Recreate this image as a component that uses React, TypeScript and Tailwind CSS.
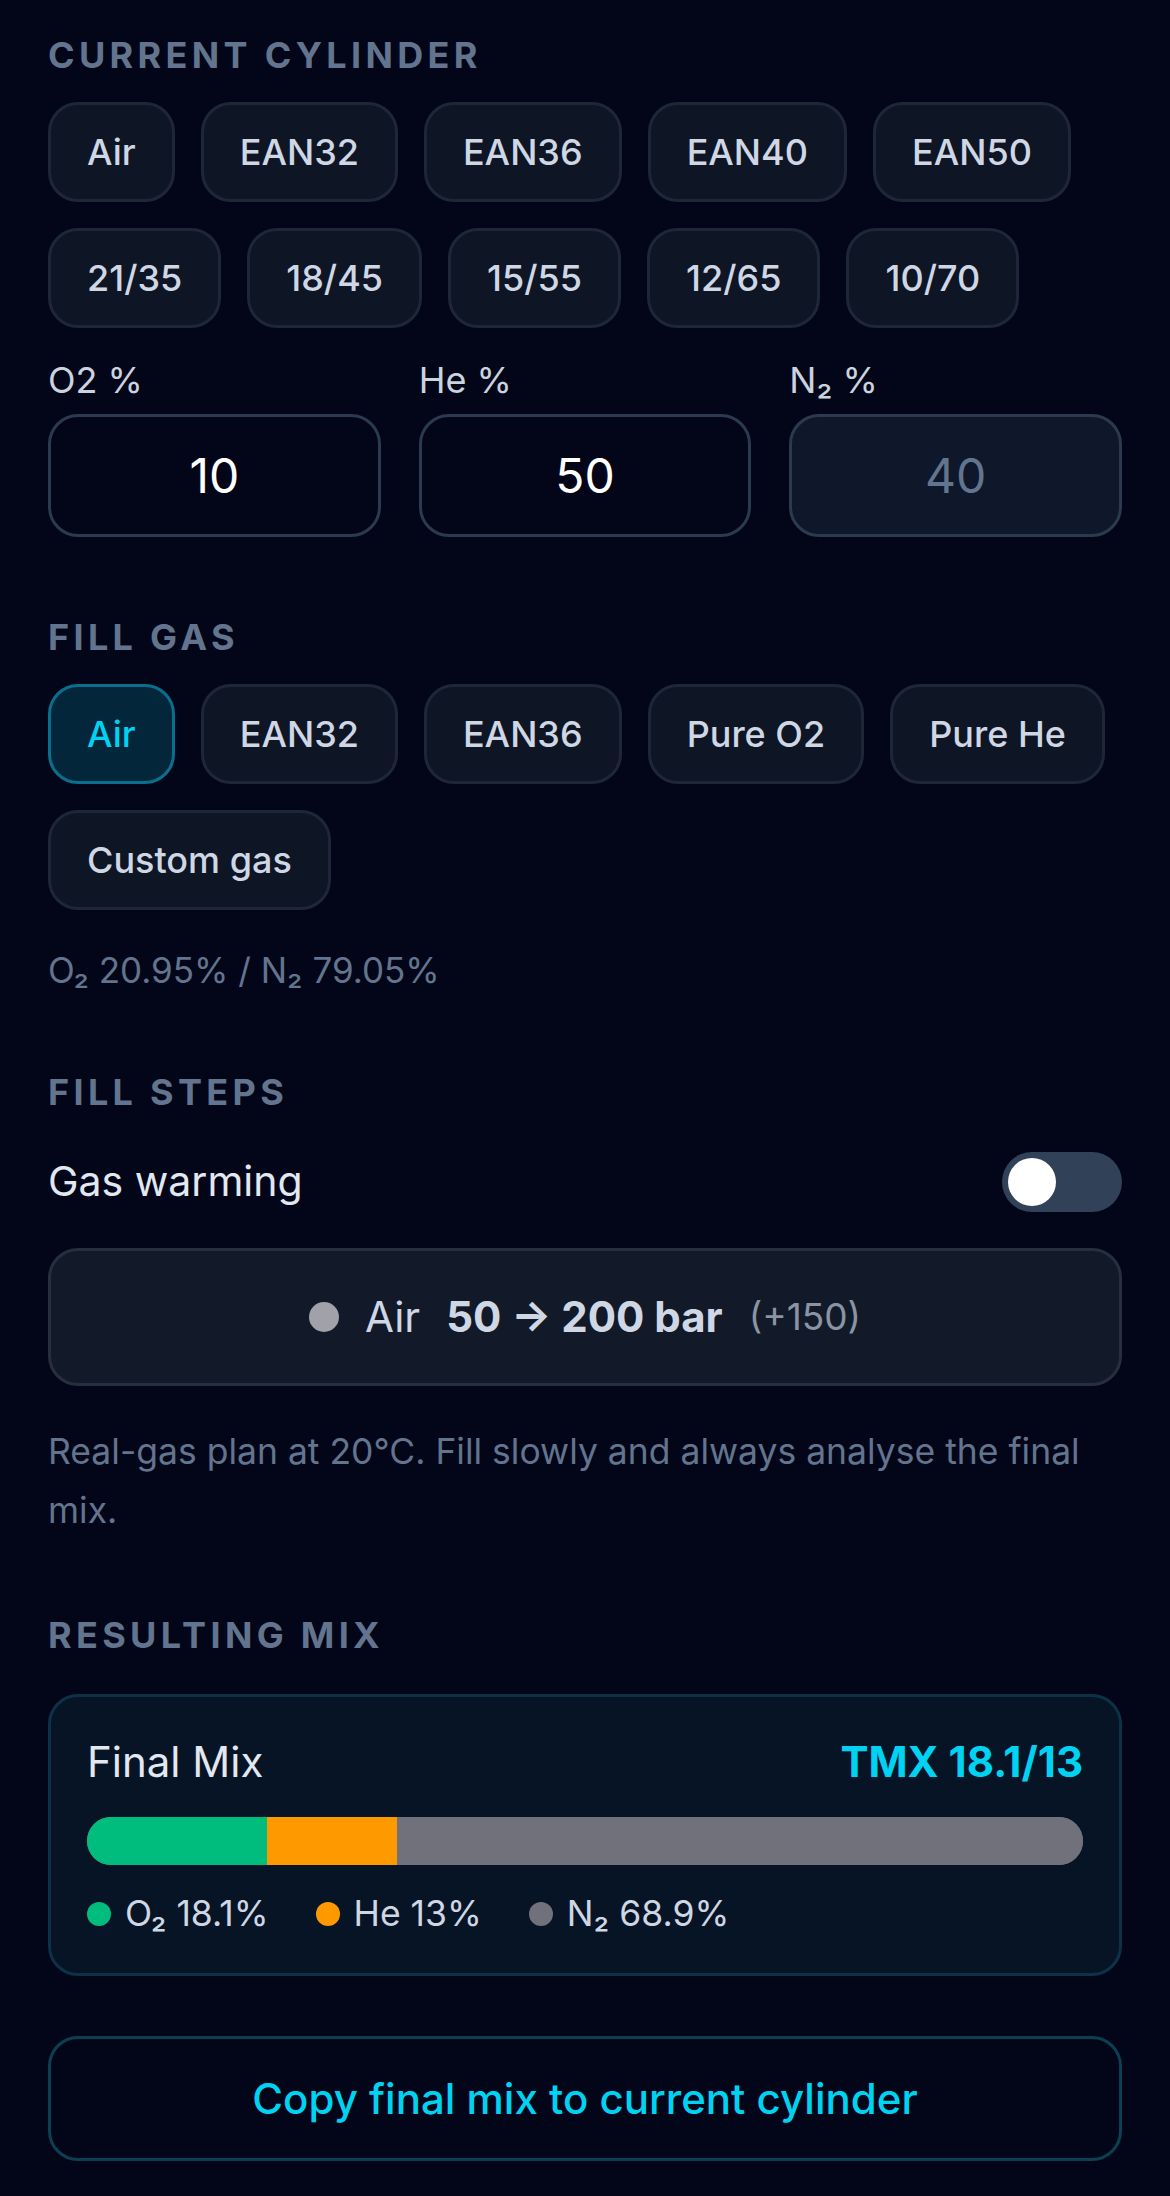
import clsx from "clsx";

const cylinderPresets = [
  ["Air", "EAN32", "EAN36", "EAN40", "EAN50"],
  ["21/35", "18/45", "15/55", "12/65", "10/70"],
];

const fillGases = ["Air", "EAN32", "EAN36", "Pure O2", "Pure He", "Custom gas"];

function SectionTitle({ children, className }: { children: React.ReactNode; className?: string }) {
  return (
    <h2
      className={clsx(
        "text-[36px] font-bold uppercase leading-[36px] tracking-[0.12em] text-[#62748e]",
        className
      )}
    >
      {children}
    </h2>
  );
}

function Chip({ label, active = false }: { label: string; active?: boolean }) {
  return (
    <button
      type="button"
      className={clsx(
        "h-[100px] rounded-[30px] border-[3px] px-[36px] text-[36px] font-medium leading-none",
        active
          ? "border-[#0a6f8c] bg-[#04263a] text-[#00d3f2]"
          : "border-[#1e2738] bg-[#0e1525] text-[#cfd7e4]"
      )}
    >
      {label}
    </button>
  );
}

function PercentField({ label, value, locked = false }: { label: string; value: string; locked?: boolean }) {
  return (
    <label className="flex flex-col">
      <span className="text-[36px] leading-[36px] text-[#cbd3df]">{label}</span>
      <input
        readOnly
        value={value}
        className={clsx(
          "mt-[16px] h-[123px] w-full rounded-[30px] border-[3px] border-[#2c3a4f] text-center text-[48px] outline-none",
          locked ? "bg-[#0f172b] text-[#62748e]" : "bg-[#020618] text-white"
        )}
      />
    </label>
  );
}

function LegendItem({ color, label }: { color: string; label: string }) {
  return (
    <span className="flex items-center gap-[14px]">
      <span className={clsx("h-[24px] w-[24px] rounded-full", color)} />
      <span>{label}</span>
    </span>
  );
}

export default function App() {
  return (
    <div
      className="min-h-screen bg-[#020618] px-[48px] pb-[34px] pt-[37px]"
      style={{ fontFamily: "Inter, 'Noto Sans', sans-serif" }}
    >
      <SectionTitle>Current cylinder</SectionTitle>
      <div className="mt-[29px] flex flex-col gap-[26px]">
        {cylinderPresets.map((row, i) => (
          <div key={i} className="flex flex-wrap gap-[26px]">
            {row.map((p) => (
              <Chip key={p} label={p} />
            ))}
          </div>
        ))}
      </div>

      <div className="mt-[34px] grid grid-cols-3 gap-[38px]">
        <PercentField label="O2 %" value="10" />
        <PercentField label="He %" value="50" />
        <PercentField label="N₂ %" value="40" locked />
      </div>

      <SectionTitle className="mt-[82px]">Fill gas</SectionTitle>
      <div className="mt-[29px] flex flex-wrap gap-[26px]">
        {fillGases.map((g) => (
          <Chip key={g} label={g} active={g === "Air"} />
        ))}
      </div>
      <p className="mt-[42px] text-[35px] leading-[36px] text-[#62748e]">O₂ 20.95% / N₂ 79.05%</p>

      <SectionTitle className="mt-[86px]">Fill steps</SectionTitle>
      <div className="mt-[41px] flex items-center justify-between">
        <span className="text-[41px] text-[#e2e8f0]">Gas warming</span>
        <button type="button" className="flex h-[60px] w-[120px] items-center rounded-full bg-[#314158] p-[6px]">
          <span className="h-[48px] w-[48px] rounded-full bg-white" />
        </button>
      </div>

      <div className="mt-[35px] flex h-[138px] items-center justify-center gap-[26px] rounded-[30px] border-[3px] border-[#272f3e] bg-[#121a29]">
        <span className="h-[30px] w-[30px] rounded-full bg-[#a1a1aa]" />
        <span className="text-[42px] text-[#cfd7e4]">Air</span>
        <span className="text-[42px] font-bold text-[#cfd7e4]">50 → 200 bar</span>
        <span className="text-[37px] text-[#8a94a4]">(+150)</span>
      </div>

      <p className="mt-[36px] text-[35.5px] leading-[59px] text-[#62748e]">
        Real-gas plan at 20°C. Fill slowly and always analyse the final mix.
      </p>

      <SectionTitle className="mt-[77px]">Resulting mix</SectionTitle>
      <div className="mt-[41px] rounded-[30px] border-[3px] border-[#0d3146] bg-[#071426] px-[36px] pb-[41px] pt-[44px]">
        <div className="flex items-center justify-between text-[42px] leading-[42px]">
          <span className="text-[#e2e8f0]">Final Mix</span>
          <span className="font-bold text-[#00d3f2]">TMX 18.1/13</span>
        </div>
        <div className="mt-[34px] flex h-[48px] overflow-hidden rounded-full bg-zinc-500">
          <div className="h-full bg-emerald-500" style={{ width: "18.1%" }} />
          <div className="h-full bg-amber-500" style={{ width: "13%" }} />
          <div className="h-full flex-1 bg-zinc-500" />
        </div>
        <div className="mt-[31px] flex items-center gap-[47px] text-[35.5px] leading-[36px] text-[#cfd7e4]">
          <LegendItem color="bg-emerald-500" label="O₂ 18.1%" />
          <LegendItem color="bg-amber-500" label="He 13%" />
          <LegendItem color="bg-zinc-500" label="N₂ 68.9%" />
        </div>
      </div>

      <button
        type="button"
        className="mt-[60px] flex h-[125px] w-full items-center justify-center rounded-[30px] border-[3px] border-[#0b3f52] text-[42px] font-medium text-[#00d3f2]"
      >
        Copy final mix to current cylinder
      </button>
    </div>
  );
}
